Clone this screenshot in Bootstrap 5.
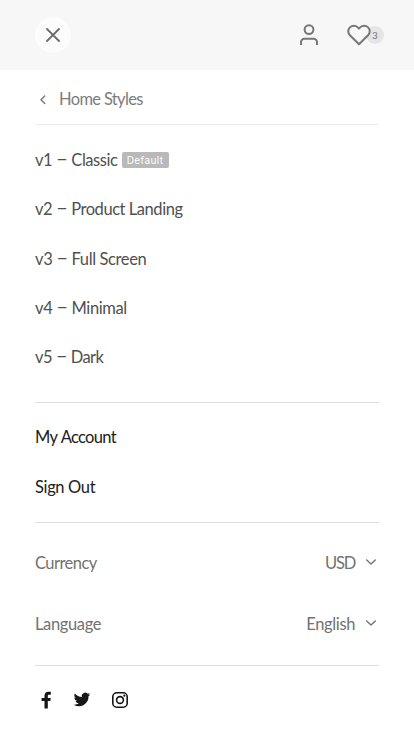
<!DOCTYPE html>
<html lang="en">
<head>
<meta charset="utf-8">
<meta name="viewport" content="width=device-width, initial-scale=1">
<title>Menu</title>
<link href="https://cdn.jsdelivr.net/npm/bootstrap@5.3.0/dist/css/bootstrap.min.css" rel="stylesheet">
<style>
body{font-family:Lato,"Liberation Sans",sans-serif;font-size:16.5px;line-height:24px;color:#505050;background:#fff}
a{color:inherit;text-decoration:none}
svg{display:block;fill:none;stroke:currentColor;flex-shrink:0}
.menu-page{height:736px;overflow:hidden}
.topbar{height:70px;background:#f7f7f7;color:#777;padding:0 30px 0 35px}
.close-btn{width:36px;height:36px;background:#fcfcfc;color:#6b6b6b}
.count{width:18px;height:18px;background:#e5e5e5;color:#777;font-size:10px;line-height:18px;margin-left:-5px}
.drawer{padding:0 35px}
.back-row{height:55px;padding-top:3px;color:#7c7c7c;border-bottom:1px solid #ebebeb}
.rule-b{border-bottom:1px solid #dedede}
.styles-list{height:278px;padding-top:10.5px}
.styles-list li{height:49.25px}
.dash{font-size:20.5px;line-height:1}
.account-list{height:120px;padding-top:9.5px;color:#202020}
.account-list li{height:49.5px}
.settings{height:143px;padding-top:9px;color:#727272}
.settings > div{height:61px}
.tag{background:#b9b9b9;color:#fff;font:10px/16px Inter,sans-serif;letter-spacing:.4px;width:47px;height:16px;border-radius:2px;margin-left:4px}
.t0{letter-spacing:-.66px}
.t1{letter-spacing:-.43px}
.t3,.t4{letter-spacing:-.38px}
.t2{letter-spacing:-.45px}
.t5{letter-spacing:-.55px}
.t6{letter-spacing:-.7px;word-spacing:1px}
.t7{letter-spacing:-.35px}
.t8{letter-spacing:-.55px}
.t9{letter-spacing:-1.200px}
.t10,.t11{letter-spacing:-.37px}
.social{height:68px;color:#161616;padding-left:4px}
.social svg{fill:currentColor;stroke:none}
</style>
</head>
<body>
<div class="menu-page">
<header class="topbar d-flex align-items-center justify-content-between">
<button class="close-btn btn p-0 border-0 rounded-circle d-flex align-items-center justify-content-center" aria-label="Close"><svg width="14" height="14" viewBox="0 0 14 14" stroke-width="1.8" stroke-linecap="round"><path d="M1 1l12 12M13 1L1 13"/></svg></button>
<div class="d-flex align-items-center">
<a href="#" class="me-4" aria-label="Account"><svg width="24" height="24" viewBox="0 0 24 24" stroke-width="2"><circle cx="12" cy="6.600" r="4.400"/><path d="M4 22v-2.700a3.600 3.600 0 0 1 3.600-3.600h8.800a3.600 3.600 0 0 1 3.600 3.600V22"/></svg></a>
<a href="#" class="d-flex align-items-center" aria-label="Wishlist"><svg class="position-relative z-1" width="26" height="24" viewBox="0 0 26 24" stroke-width="2" stroke-linejoin="round"><path fill="#f7f7f7" d="M14 21.300L4.900 12.300a5.550 5.550 0 0 1 7.900-7.900L14 5.600l1.200-1.200a5.550 5.550 0 0 1 7.900 7.900z"/></svg><span class="count rounded-circle text-center">3</span></a>
</div>
</header>
<main class="drawer">
<a href="#" class="back-row d-flex align-items-center"><svg width="16" height="16" viewBox="0 0 16 16" stroke-width="1.5" stroke-linecap="round" stroke-linejoin="round"><path d="M9.700 5L6 8.700l3.700 3.800"/></svg><span class="t0 ms-2">Home Styles</span></a>
<ul class="styles-list rule-b list-unstyled mb-0">
<li class="d-flex align-items-center"><a class="t1" href="#">v1 <span class="dash">–</span> Classic</a><span class="tag text-center">Default</span></li>
<li class="d-flex align-items-center"><a class="t2" href="#">v2 <span class="dash">–</span> Product Landing</a></li>
<li class="d-flex align-items-center"><a class="t3" href="#">v3 <span class="dash">–</span> Full Screen</a></li>
<li class="d-flex align-items-center"><a class="t4" href="#">v4 <span class="dash">–</span> Minimal</a></li>
<li class="d-flex align-items-center"><a class="t5" href="#">v5 <span class="dash">–</span> Dark</a></li>
</ul>
<ul class="account-list rule-b list-unstyled mb-0">
<li class="d-flex align-items-center"><a class="t6" href="#">My Account</a></li>
<li class="d-flex align-items-center"><a class="t7" href="#">Sign Out</a></li>
</ul>
<div class="settings rule-b">
<div class="d-flex align-items-center justify-content-between"><span class="t8">Currency</span><span class="d-flex align-items-center"><span class="t9">USD</span><svg class="ms-2" width="16" height="16" viewBox="0 0 16 16" stroke-width="1.4" stroke-linecap="round" stroke-linejoin="round"><path d="M3.700 5L8 9l4.300-4"/></svg></span></div>
<div class="d-flex align-items-center justify-content-between"><span class="t10">Language</span><span class="d-flex align-items-center"><span class="t11">English</span><svg class="ms-2" width="16" height="16" viewBox="0 0 16 16" stroke-width="1.4" stroke-linecap="round" stroke-linejoin="round"><path d="M3.700 5L8 9l4.300-4"/></svg></span></div>
</div>
<div class="social d-flex align-items-center">
<a href="#" aria-label="Facebook"><svg width="14" height="18" viewBox="0 0 14 18"><path d="M5.500 17.500V10H2.600V7h2.900V5C5.500 2.300 7 .8 9.300 .8h2.500v3H10C9.200 3.800 8.800 4.200 8.800 5v2h3L11.300 10H8.800v7.500z"/></svg></a>
<a href="#" class="ms-3 ps-1" aria-label="Twitter"><svg width="18" height="18" viewBox="0 0 24 24"><path d="M23 4.500a9 9 0 0 1-2.600.7 4.500 4.500 0 0 0 2-2.500 9 9 0 0 1-2.900 1.100A4.500 4.500 0 0 0 11.800 8 12.800 12.800 0 0 1 2.500 3.200a4.500 4.500 0 0 0 1.400 6 4.500 4.500 0 0 1-2-.6 4.500 4.500 0 0 0 3.600 4.500 4.500 4.500 0 0 1-2 .1 4.500 4.500 0 0 0 4.200 3.100A9 9 0 0 1 1 18.200 12.800 12.800 0 0 0 20.700 6.800 9 9 0 0 0 23 4.500z"/></svg></a>
<a href="#" class="ms-3 ps-1" aria-label="Instagram"><svg width="18" height="18" viewBox="0 0 18 18"><g fill="none" stroke="currentColor" stroke-width="1.600"><rect x="1.800" y="1.800" width="14.400" height="14.400" rx="4"/><circle cx="9" cy="9" r="3.400"/></g><circle cx="13.300" cy="4.700" r="1.100"/></svg></a>
</div>
</main>
</div>
<script src="https://cdn.jsdelivr.net/npm/bootstrap@5.3.0/dist/js/bootstrap.bundle.min.js"></script>
</body>
</html>
